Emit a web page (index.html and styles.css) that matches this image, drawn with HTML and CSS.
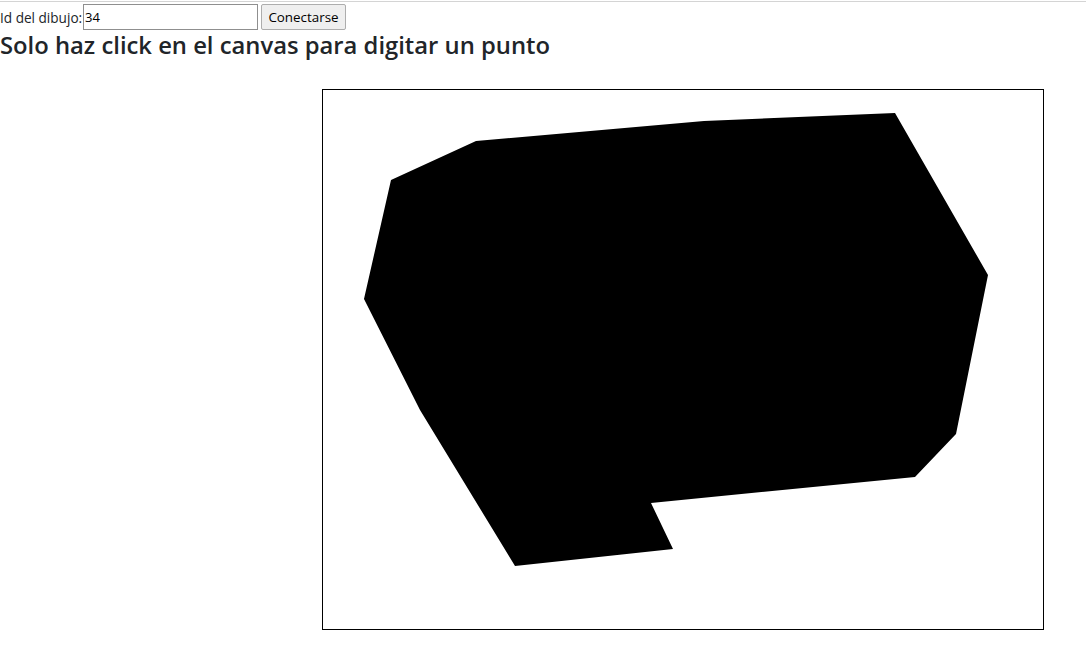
FILE: index.html
```html
<!DOCTYPE html>
<html lang="es">
<head>
<meta charset="utf-8">
<title>Dibujo</title>
<link rel="stylesheet" href="styles.css">
</head>
<body>
<div class="topline"></div>
<div class="connect-row">
  <label class="id-label" for="drawId">Id del dibujo:</label><input id="drawId" class="id-input" type="text" value="34"><button class="connect-btn" type="button">Conectarse</button>
</div>
<h4 class="title">Solo haz click en el canvas para digitar un punto</h4>
<div class="canvas-wrap">
  <svg class="canvas" width="720" height="539" viewBox="0 0 720 539" xmlns="http://www.w3.org/2000/svg">
    <polygon fill="#000" points="153,51 381,31 572,23 665,185 633,344 592,387 328,413 350,459 192,476 97,320 41,209 68,90"/>
  </svg>
</div>
</body>
</html>
```
FILE: styles.css
```css
html, body {
  margin: 0;
  padding: 0;
  background: #fff;
}
body {
  font-family: "Open Sans", "Noto Sans", "Liberation Sans", sans-serif;
  color: #212529;
}
.topline {
  height: 1px;
  margin-top: 1px;
  background: #d4d4d4;
}
.connect-row {
  display: flex;
  align-items: center;
  height: 26px;
  margin-top: 2px;
}
.id-label {
  width: 83px;
  font-size: 13.6px;
  color: #212529;
  white-space: nowrap;
}
.id-input {
  box-sizing: border-box;
  width: 175px;
  height: 26px;
  margin: 0;
  padding: 0 1px;
  border: 1px solid #8f8f8f;
  font-family: inherit;
  font-size: 13px;
  color: #000;
  background: #fff;
}
.connect-btn {
  box-sizing: border-box;
  width: 85px;
  height: 26px;
  margin: 0 0 0 3px;
  padding: 0;
  border: 1px solid #adadad;
  border-radius: 2px;
  background: #efefef;
  font-family: inherit;
  font-size: 13.4px;
  color: #000;
}
.title {
  margin: 0;
  font-size: 23.8px;
  font-weight: 550;
  line-height: 30px;
  color: #212529;
}
.canvas-wrap {
  margin-top: 29px;
  padding-left: 322px;
}
.canvas {
  display: block;
  border: 1px solid #000;
  background: #fff;
}
```
